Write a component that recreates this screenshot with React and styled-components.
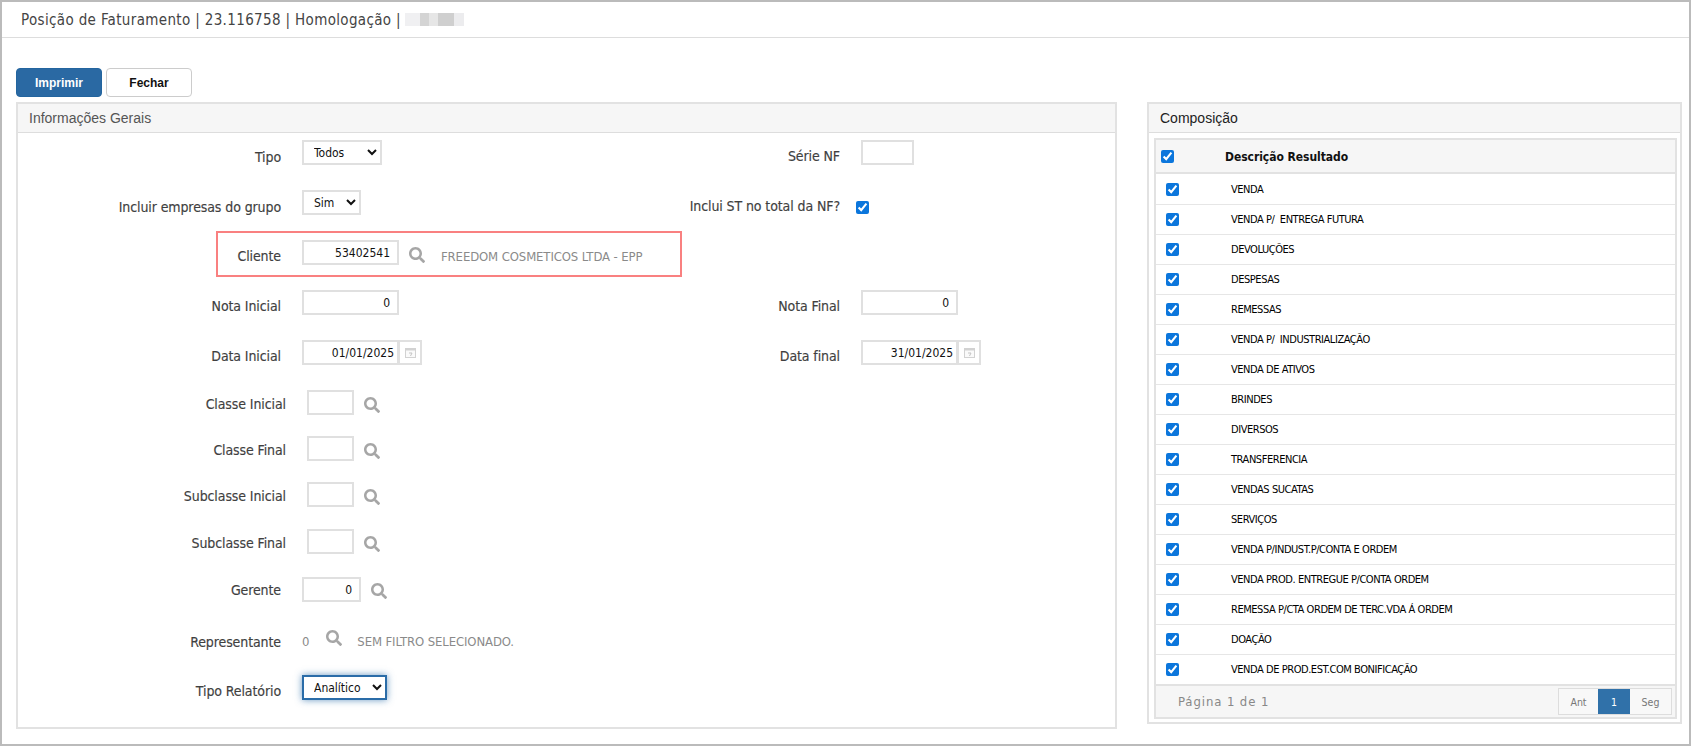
import React from "react";
import styled, { createGlobalStyle } from "styled-components";
import { FaSearch } from "react-icons/fa";

const FORM_FONT = `"DejaVu Sans Condensed", "DejaVu Sans", sans-serif`;
const ARIAL = `"Liberation Sans", Arial, sans-serif`;

const GlobalStyle = createGlobalStyle`
  html, body {
    margin: 0;
    padding: 0;
    background: #fff;
  }
  * {
    box-sizing: border-box;
  }
`;

const Shell = styled.div`
  width: 1691px;
  height: 746px;
  border: 2px solid #bbb;
  overflow: hidden;
  background: #fff;
  font-family: ${FORM_FONT};
`;

const TopBar = styled.header`
  height: 36px;
  border-bottom: 1px solid #ddd;
  padding-left: 19px;
  display: flex;
  align-items: center;
  font-size: 15px;
  letter-spacing: 0.35px;
  color: #444;
`;

const Redacted = styled.span`
  display: inline-block;
  width: 59px;
  height: 13px;
  margin-left: 4px;
  background: linear-gradient(
    to right,
    #f0f0f2 0 15px,
    #d4d4d4 15px 24px,
    #e6e6e6 24px 33px,
    #cfcfcf 33px 49px,
    #ececee 49px 59px
  );
`;

const Content = styled.main`
  padding: 30px 0 0 14px;
`;

const Toolbar = styled.div`
  display: flex;
  gap: 4px;
  margin-bottom: 5px;
`;

const ActionButton = styled.button`
  width: 86px;
  height: 29px;
  border-radius: 4px;
  border: 1px solid ${(props) => (props.$primary ? "#23659f" : "#ccc")};
  background: ${(props) => (props.$primary ? "#2a69a3" : "#fff")};
  color: ${(props) => (props.$primary ? "#fff" : "#111")};
  font-family: ${ARIAL};
  font-size: 12px;
  font-weight: 700;
  padding: 0;
`;

const Columns = styled.div`
  display: flex;
  gap: 30px;
  align-items: flex-start;
`;

const Panel = styled.section`
  flex: 0 0 ${(props) => props.$width}px;
  height: ${(props) => props.$height}px;
  border: 2px solid #e2e2e2;
`;

const PanelTitle = styled.h2`
  margin: 0;
  height: 29px;
  padding-left: 11px;
  display: flex;
  align-items: center;
  background: #f6f6f6;
  border-bottom: 1px solid #ddd;
  font-family: ${ARIAL};
  font-size: 14px;
  font-weight: 400;
  color: ${(props) => props.$color};
`;

const FormBody = styled.div`
  padding-top: 7px;
`;

const FormRow = styled.div`
  display: grid;
  grid-template-columns: 623px 1fr;
  height: ${(props) => props.$h}px;
`;

const Field = styled.div`
  display: flex;
  align-items: flex-start;
`;

const Label = styled.label`
  width: ${(props) => props.$w}px;
  margin-right: ${(props) => props.$gap || 21}px;
  padding-top: ${(props) => props.$top || 7}px;
  text-align: right;
  font-size: 14px;
  letter-spacing: -0.1px;
  line-height: 18px;
  color: #3f3f3f;
  -webkit-text-stroke: 0.15px #3f3f3f;
  white-space: nowrap;
`;

const Highlight = styled.div`
  grid-column: 1 / -1;
  width: 466px;
  height: 46px;
  margin-left: 198px;
  padding-top: 7px;
  border: 2px solid #f98080;
`;

const TextInput = styled.input`
  width: ${(props) => props.$w}px;
  height: 25px;
  border: 2px solid #e0e0e0;
  padding: 0 ${(props) => props.$padRight || 7}px 0 2px;
  text-align: right;
  font-family: ${FORM_FONT};
  font-size: 12px;
  color: #111;
  background: #fff;
  outline: none;
`;

const Select = styled.select`
  width: ${(props) => props.$w}px;
  height: 25px;
  border: 2px solid ${(props) => (props.$focused ? "#2a6ca8" : "#e0e0e0")};
  box-shadow: ${(props) => (props.$focused ? "0 0 7px rgba(42, 108, 168, 0.7)" : "none")};
  border-radius: 0;
  padding: 0 0 0 6px;
  font-family: ${FORM_FONT};
  font-size: 12px;
  color: #111;
  background: #fff;
  outline: none;
`;

const Addon = styled.span`
  width: 24px;
  height: 25px;
  margin-left: -1px;
  border: 2px solid #e0e0e0;
  display: flex;
  align-items: center;
  justify-content: center;
`;

const SearchIcon = styled(FaSearch)`
  color: #a6a6a6;
  font-size: 16px;
  margin: ${(props) => props.$top || 7}px 0 0 ${(props) => props.$left}px;
  flex: none;
`;

const GrayText = styled.span`
  font-size: 13px;
  letter-spacing: -0.12px;
  line-height: 18px;
  padding-top: ${(props) => props.$top || 7}px;
  margin-left: ${(props) => props.$left}px;
  color: #8a8a8a;
  white-space: nowrap;
`;

const Check = styled.input.attrs({ type: "checkbox" })`
  width: 13px;
  height: 13px;
  margin: ${(props) => props.$margin};
  accent-color: #0b76dc;
  flex: none;
`;

const Table = styled.div`
  margin: 5px 3px 0 5px;
  border: 2px solid #e2e2e2;
`;

const TableHead = styled.div`
  height: 34px;
  display: flex;
  align-items: center;
  background: #f6f6f6;
  border-bottom: 2px solid #e2e2e2;
  padding-left: 5px;
`;

const HeadText = styled.span`
  margin-left: 51px;
  padding-top: 1px;
  font-size: 12px;
  font-weight: 700;
  letter-spacing: -0.05px;
  color: #111;
`;

const TableRow = styled.div`
  height: 30px;
  display: flex;
  align-items: center;
  padding-left: 10px;
  border-top: ${(props) => (props.$first ? "none" : "1px solid #e6e6e6")};
`;

const RowText = styled.span`
  margin-left: 52px;
  font-size: 11px;
  letter-spacing: -0.45px;
  color: #000;
  white-space: pre;
`;

const TableFoot = styled.div`
  height: 33px;
  display: flex;
  align-items: center;
  justify-content: space-between;
  padding: 0 3px 0 22px;
  background: #f6f6f6;
  border-top: 2px solid #e2e2e2;
`;

const PageInfo = styled.span`
  font-size: 13px;
  letter-spacing: 0.9px;
  color: #888;
`;

const Pager = styled.div`
  display: flex;
  height: 27px;
  border: 1px solid #ddd;
  background: #f8f8f8;
`;

const PageItem = styled.span`
  width: ${(props) => props.$w}px;
  display: flex;
  align-items: center;
  justify-content: center;
  font-size: 10.5px;
  color: ${(props) => (props.$active ? "#fff" : "#777")};
  background: ${(props) => (props.$active ? "#3071a9" : "transparent")};
`;

const compositionItems = [
  "VENDA",
  "VENDA P/  ENTREGA FUTURA",
  "DEVOLUÇÕES",
  "DESPESAS",
  "REMESSAS",
  "VENDA P/  INDUSTRIALIZAÇÃO",
  "VENDA DE ATIVOS",
  "BRINDES",
  "DIVERSOS",
  "TRANSFERENCIA",
  "VENDAS SUCATAS",
  "SERVIÇOS",
  "VENDA P/INDUST.P/CONTA E ORDEM",
  "VENDA PROD. ENTREGUE P/CONTA ORDEM",
  "REMESSA P/CTA ORDEM DE TERC.VDA Á ORDEM",
  "DOAÇÃO",
  "VENDA DE PROD.EST.COM BONIFICAÇÃO",
];

function CalendarIcon() {
  return (
    <svg width="11" height="11" viewBox="0 0 11 11" fill="none">
      <rect x="0.5" y="1.5" width="10" height="9" fill="#fafafa" stroke="#d2d2d2" />
      <rect x="0.5" y="1.5" width="10" height="2" fill="#d2d2d2" />
      <path d="M4 6h3L5.5 9" stroke="#c4c4c4" />
    </svg>
  );
}

function DateField({ value }) {
  return (
    <>
      <TextInput $w={97} $padRight={3} defaultValue={value} />
      <Addon>
        <CalendarIcon />
      </Addon>
    </>
  );
}

function LookupRow({ label, h }) {
  return (
    <FormRow $h={h}>
      <Field>
        <Label $w={268} $top={5}>{label}</Label>
        <TextInput $w={47} defaultValue="" />
        <SearchIcon $left={10} />
      </Field>
    </FormRow>
  );
}

function GeneralInfo() {
  return (
    <Panel $width={1101} $height={627}>
      <PanelTitle $color="#555">Informações Gerais</PanelTitle>
      <FormBody>
        <FormRow $h={50}>
          <Field>
            <Label $w={263} $top={8}>Tipo</Label>
            <Select $w={80} defaultValue="Todos">
              <option>Todos</option>
            </Select>
          </Field>
          <Field>
            <Label $w={199}>Série NF</Label>
            <TextInput $w={53} defaultValue="" />
          </Field>
        </FormRow>
        <FormRow $h={41}>
          <Field>
            <Label $w={263} $top={8}>Incluir empresas do grupo</Label>
            <Select $w={59} defaultValue="Sim">
              <option>Sim</option>
            </Select>
          </Field>
          <Field>
            <Label $w={199} $gap={16}>Inclui ST no total da NF?</Label>
            <Check defaultChecked $margin="11px 0 0 0" />
          </Field>
        </FormRow>
        <FormRow $h={59}>
          <Highlight>
            <Field>
              <Label $w={63}>Cliente</Label>
              <TextInput $w={97} defaultValue="53402541" />
              <SearchIcon $left={10} />
              <GrayText $left={16} $top={8}>FREEDOM COSMETICOS LTDA - EPP</GrayText>
            </Field>
          </Highlight>
        </FormRow>
        <FormRow $h={50}>
          <Field>
            <Label $w={263}>Nota Inicial</Label>
            <TextInput $w={97} defaultValue="0" />
          </Field>
          <Field>
            <Label $w={199}>Nota Final</Label>
            <TextInput $w={97} defaultValue="0" />
          </Field>
        </FormRow>
        <FormRow $h={50}>
          <Field>
            <Label $w={263}>Data Inicial</Label>
            <DateField value="01/01/2025" />
          </Field>
          <Field>
            <Label $w={199}>Data final</Label>
            <DateField value="31/01/2025" />
          </Field>
        </FormRow>
        <LookupRow label="Classe Inicial" h={46} />
        <LookupRow label="Classe Final" h={46} />
        <LookupRow label="Subclasse Inicial" h={47} />
        <LookupRow label="Subclasse Final" h={48} />
        <FormRow $h={50}>
          <Field>
            <Label $w={263} $top={4}>Gerente</Label>
            <TextInput $w={59} defaultValue="0" />
            <SearchIcon $left={10} $top={6} />
          </Field>
        </FormRow>
        <FormRow $h={48}>
          <Field>
            <Label $w={263} $top={6}>Representante</Label>
            <GrayText $left={0} $top={6}>0</GrayText>
            <SearchIcon $left={17} $top={3} />
            <GrayText $left={15} $top={6}>SEM FILTRO SELECIONADO.</GrayText>
          </Field>
        </FormRow>
        <FormRow $h={40}>
          <Field>
            <Label $w={263}>Tipo Relatório</Label>
            <Select $w={85} $focused defaultValue="Analítico">
              <option>Analítico</option>
            </Select>
          </Field>
        </FormRow>
      </FormBody>
    </Panel>
  );
}

function Composition() {
  return (
    <Panel $width={535} $height={622}>
      <PanelTitle $color="#222">Composição</PanelTitle>
      <Table>
        <TableHead>
          <Check defaultChecked $margin="0" />
          <HeadText>Descrição Resultado</HeadText>
        </TableHead>
        {compositionItems.map((item, index) => (
          <TableRow key={item} $first={index === 0}>
            <Check defaultChecked $margin="0" />
            <RowText>{item}</RowText>
          </TableRow>
        ))}
        <TableFoot>
          <PageInfo>Página 1 de 1</PageInfo>
          <Pager>
            <PageItem $w={39}>Ant</PageItem>
            <PageItem $w={32} $active>1</PageItem>
            <PageItem $w={41}>Seg</PageItem>
          </Pager>
        </TableFoot>
      </Table>
    </Panel>
  );
}

export default function App() {
  return (
    <>
      <GlobalStyle />
      <Shell>
        <TopBar>
          Posição de Faturamento | 23.116758 | Homologação |<Redacted />
        </TopBar>
        <Content>
          <Toolbar>
            <ActionButton $primary>Imprimir</ActionButton>
            <ActionButton>Fechar</ActionButton>
          </Toolbar>
          <Columns>
            <GeneralInfo />
            <Composition />
          </Columns>
        </Content>
      </Shell>
    </>
  );
}
